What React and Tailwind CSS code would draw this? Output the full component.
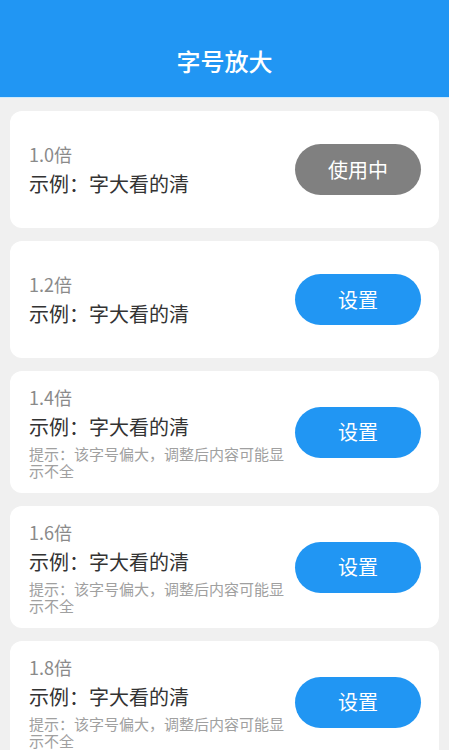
import React from "react";

const levels = [
  { scale: "1.0倍", active: true, hint: false },
  { scale: "1.2倍", active: false, hint: false },
  { scale: "1.4倍", active: false, hint: true },
  { scale: "1.6倍", active: false, hint: true },
  { scale: "1.8倍", active: false, hint: true },
];

const FONT = { fontFamily: '"Noto Sans CJK SC", "Noto Sans", sans-serif' };

const LevelCard = ({ scale, active, hint }) => (
  <div className="bg-white rounded-[12px] min-h-[117px] py-[14px] pl-[19px] pr-[18px] flex items-center justify-between">
    <div className="w-[262px]">
      <p className="text-[18px] leading-[24px] text-[#8a8a8a]">{scale}</p>
      <p className="mt-1 text-[20px] leading-[28px] text-[#333333]">示例：字大看的清</p>
      {hint && (
        <p className="mt-1 text-[15px] leading-[17px] text-[#a0a0a0]">
          提示：该字号偏大，调整后内容可能显示不全
        </p>
      )}
    </div>
    <button
      className={`w-[126px] h-[51px] rounded-full text-white text-[20px] shrink-0 ${
        active ? "bg-[#808080]" : "bg-[#2196f3]"
      }`}
    >
      {active ? "使用中" : "设置"}
    </button>
  </div>
);

export default function App() {
  return (
    <div className="min-h-screen bg-[#f0f0f0] overflow-hidden h-[750px]" style={FONT}>
      {/* Header */}
      <div className="h-[98px] bg-[#2196f3] border-b border-[#cfeafb] flex items-end justify-center pb-[20px]">
        <h1 className="text-white text-[24px] leading-[32px] font-medium">字号放大</h1>
      </div>

      {/* Options */}
      <div className="px-[10px] pt-[13px] flex flex-col gap-[13px]">
        {levels.map((l) => (
          <LevelCard key={l.scale} {...l} />
        ))}
      </div>
    </div>
  );
}
